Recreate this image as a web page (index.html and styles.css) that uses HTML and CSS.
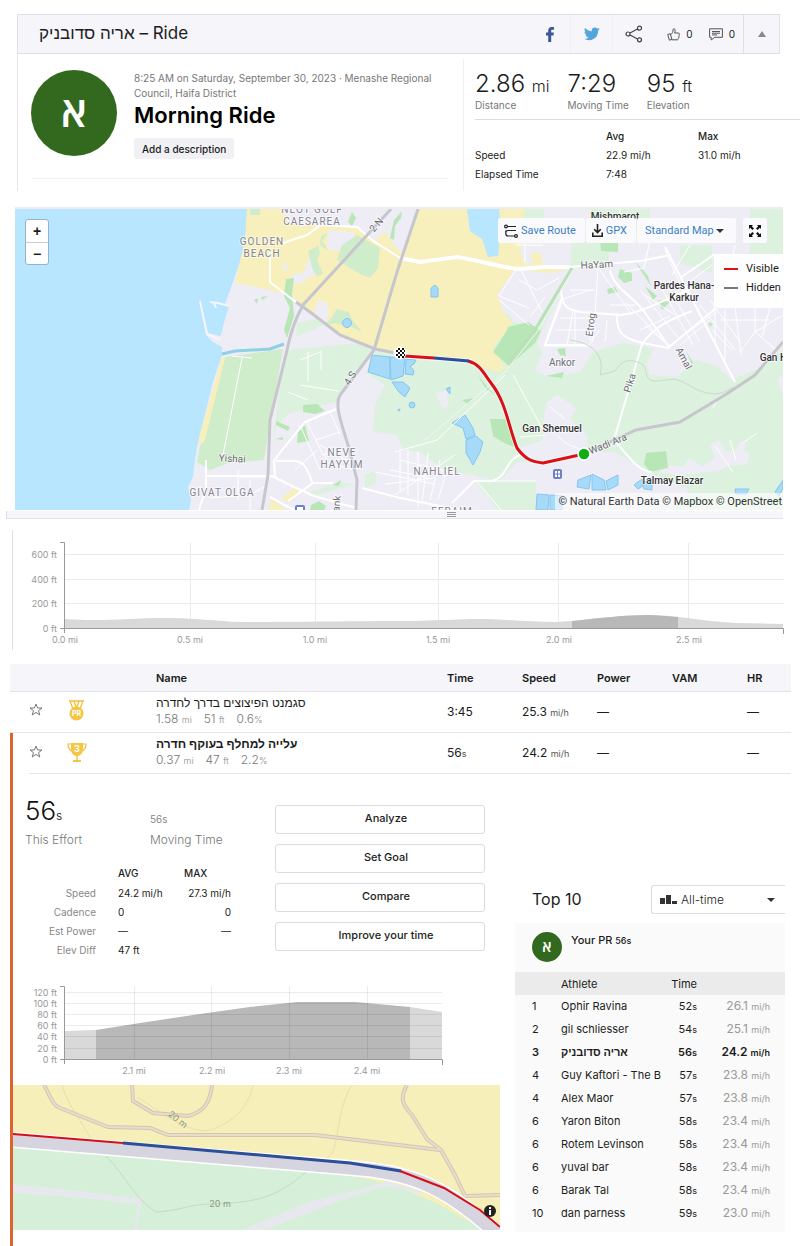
FILE: index.html
```html
<!DOCTYPE html>
<html lang="en">
<head>
  <meta charset="UTF-8" />
  <meta name="viewport" content="width=device-width, initial-scale=1.0"/>
  <title>Morning Ride</title>
  <link rel="stylesheet" href="styles.css">
</head>
<body>
  <header class="topbar">
    <h2>אריה סדובניק – Ride</h2>
    <nav class="share">
      <a href="#" class="share-item" aria-label="Facebook">
        <svg width="8" height="15" viewBox="0 0 8 15"><path fill="#3b5998" d="M2.200 15V8.400H0V5.600h2.200V3.800C2.200 1.300 3.500 0 5.600 0H8v2.700H6.500c-1 0-1.300.400-1.300 1.300v1.600H7.900l-.4 2.800H5.200V15z"/></svg>
      </a>
      <a href="#" class="share-item" aria-label="Twitter">
        <svg width="16" height="14" viewBox="0 0 24 20"><path fill="#55a4dc" d="M23.600 2.400c-.9.400-1.800.6-2.800.8 1-.6 1.800-1.600 2.100-2.700-.9.600-2 1-3.100 1.200A4.900 4.900 0 0 0 11.500 6.100 13.800 13.800 0 0 1 1.500 1c-1.300 2.200-.7 5.100 1.500 6.500-.8 0-1.600-.2-2.200-.6 0 2.300 1.600 4.400 3.900 4.900-.7.200-1.500.2-2.200.1.600 2 2.400 3.300 4.600 3.400A9.900 9.900 0 0 1 0 17.300 13.900 13.900 0 0 0 21.200 4.900c1-.7 1.800-1.500 2.400-2.500z"/></svg>
      </a>
      <a href="#" class="share-item last" aria-label="Share">
        <svg width="18" height="18" viewBox="0 0 18 18" fill="none" stroke="#444" stroke-width="1.200"><path d="M5 8l7.500-4M5 10l7.500 4"/><circle cx="3" cy="9" r="2"/><circle cx="14.500" cy="3.200" r="2"/><circle cx="14.500" cy="14.800" r="2"/></svg>
      </a>
      <button class="count-btn">
        <svg width="13" height="13" viewBox="0 0 13 13" fill="none" stroke="#555"><path d="M.7 6.500l2.600-.8 1.600 5.700-2.500.8zM3.600 6.800C5.300 5.500 6 4 6.200 1.300 6.300.4 8.100.4 8.100 2.200c0 1-.2 1.900-.5 2.800h3.700c1.300 0 1.300 1.700.5 2 .8.500.6 1.600-.2 1.800.5.600.2 1.500-.5 1.600.3.700-.1 1.400-.9 1.400H4.800"/></svg>0
      </button>
      <button class="count-btn">
        <svg width="14" height="13" viewBox="0 0 14 13" fill="none" stroke="#555"><path d="M.6.800h12.800v8.500H5.800L2.200 12V9.300H.6zM3 3.500h8M3 5.200h8M3 6.900h5"/></svg>0
      </button>
      <button class="collapse-btn" aria-label="Collapse">
        <svg width="8" height="6" viewBox="0 0 8 6"><path fill="#888" d="M4 0l4 6H0z"/></svg>
      </button>
    </nav>
  </header>

  <section class="overview">
    <div class="summary">
      <div class="avatar">א</div>
      <div class="details">
        <p class="when">8:25 AM on Saturday, September 30, 2023 · Menashe Regional Council, Haifa District</p>
        <h1>Morning Ride</h1>
        <button class="desc-btn">Add a description</button>
      </div>
    </div>
    <div class="stats">
      <ul class="main-stats">
        <li><strong>2.86 <small>mi</small></strong><span>Distance</span></li>
        <li><strong>7:29</strong><span>Moving Time</span></li>
        <li><strong>95 <small>ft</small></strong><span>Elevation</span></li>
      </ul>
      <table class="more-stats">
        <tr><th></th><th>Avg</th><th>Max</th></tr>
        <tr><td>Speed</td><td>22.9 mi/h</td><td>31.0 mi/h</td></tr>
        <tr><td>Elapsed Time</td><td>7:48</td><td></td></tr>
      </table>
    </div>
  </section>

  <section class="map">
    <svg class="map-canvas" viewBox="15 209 768 301" preserveAspectRatio="xMidYMid slice">
      <rect x="15" y="209" width="768" height="301" fill="#b8e6fe"/>
      <!-- land -->
      <path fill="#eeedf6" d="M248 209L245 240 240 262 225 304 229 306 227 327 220 336 208 333 200 301 206 335 213 342 222 347 222 355 213 382 200 435 197 447 194 467 193 477 188 487 191 500 189 510H783V209z"/>
      <path fill="none" stroke="#f6f5fb" stroke-width="2" d="M200 301L207 334 221 340M210 302l8 1 11 3M214 303l2 5"/>
      <!-- farmland -->
      <path fill="#dcf1de" d="M287 350L357 343 372 350 363 366 337 402 290 413 277 425 272 447 280 385zM297 323l30-7 5 5-36 16z"/>
      <path fill="#dcf1de" d="M376 350L520 310 545 270 575 262 540 335 537 345 542 352 535 370 547 377 580 372 593 352 623 343 653 348 647 365 650 375 677 377 687 368 695 360 715 365 732 380 765 365 783 348V510H670L690 490 640 468 615 452 590 452 560 462 517 462 500 481 473 475 445 470 420 452 403 450 397 435 373 432 375 405 385 385 366 373z"/>
      <path fill="#eeedf6" d="M543 440V420L547 402 557 395 577 408 570 418 587 435 588 455 560 462 527 458 519 448zM435 393l12-2 1 14-4 4-5-8zM525 262l45 6-35 58-22-4-14-26 20-14z"/>
      <path fill="#eeedf6" d="M777 380l6-6v20zM664 466l20 0 4-8 15 8 12-8-5-14 10-3 6 11 10-2 4-9 6 3-2 7 6 3-3 11-18 0-10 6-40 4-20-2z"/>
      <path fill="#dcf1de" d="M474 481h62v29h-38zM523 209h21v9h-21zM571 236h38v32h-38zM590 209h60v24h-60zM750 209h33v45h-33zM680 245h32v28l-32-10zM365 475l12-5-2 14-10 4zM310 492l32-10 12 2-40 12z"/>
      <path fill="#cfeccb" d="M225 357L283 349 268 435 264 460 228 463 210 470 197 462 201 440z"/>
      <path fill="#f7efbc" d="M222 357l3 1-20 82-5 6-1-9z"/>
      <!-- dunes -->
      <path fill="#f7efbc" d="M247 209H282L288 223 300 226 320 225 357 228 372 240 400 260 418 209H525L523 225 524 240 520 250 525 265 513 272 497 295 505 315 513 322 493 348 505 368 500 372 487 370 470 359 400 354 375 349 340 334 310 310 298 305 296 298 270 290 235 283 245 240z"/>
      <path fill="#f7efbc" d="M375 240l10-8 18 24-8 2zM523 264l45 5-18 4-28-3zM531 253h11v12h-8l-3-5z"/>
      <path fill="#eeedf6" d="M236 284l34 6 22 10 3 14-10 32-62 7-3-14 5-20zM310 256c12 4 12 14 4 20l-12 1 4-10zM292 275c8-3 14-3 16 2-2 6-10 7-16 6zM318 301c10-2 14 10 8 21l-12-9zM283 263l5 3-3 5-3-4zM328 230l26 2-3 20-24-3z"/>
      <path fill="#cfeccb" d="M357 235L380 248 378 268 370 278 358 273 337 260 342 245zM337 309l12 3 3 8 10 12-10-5-16-4-12 2 8-8zM250 209h10v6h-10zM308 251l10-5 2 8-3 6 6 14-6 2-5-8zM328 233l-6 8 6 9-8-5 1-9z"/>
      <path fill="#b9e6b6" d="M286 279l8-1-2 16 2 22-7 22-3-8 6-22-6-12zM254 300l4-2-1 6zM261 297l7-1-6 4zM352 212l4 6-4 8-4-4zM390 238l4-18 8-9-1 7-6 8-1 14zM303 405l14-1 8 7-10 3-12-2zM298 432l7-7 4 16-12 2zM276 421l14 6-2 4-12-6zM275 439l8-2v3zM311 505l8-4 7 5-2 5-14-1zM333 485l8-5-2 6zM508 327l20-5 13 9-6 12-26 23-16-14 13-20zM490 419l20 0 8 29-12-4-13-8zM646 453l20-2 2 17-18 4-6-8zM600 236h18v16l-17-1zM620 269l12 4v8l-8 2-6-6zM634 260l14 16 3 10zM607 289l8-2 3 5-10 2zM645 286l12 10-4 4zM658 300l12 2-8 8zM557 349l8-1 1 8-6-1zM478 376l16 18-8-5zM462 400l12-2-6 6zM546 376l18-4-2 6zM686 351l8 13-3-1zM708 322l5 2-3 3z"/>
      <path fill="#f7efbc" d="M272 499l14 11h-18zM281 498l14-10 4 3-9 12z"/>
      <!-- ponds and streams -->
      <g fill="#a5daf9" stroke="#86c5ef" stroke-width="1">
        <circle cx="347" cy="323" r="4.500"/>
        <circle cx="412" cy="405" r="3"/>
        <circle cx="399" cy="410" r="1"/>
        <path d="M431 288l4-3 3 3v9h-7zM372 355l18 2v22l-22-7zM390 357l15 1-2 18-12 4zM406 359l10 1-2 4-4 2 4 5-1 4-8-1zM392 382l11 0 7 6-5 9-6-5zM446 389l4-2v7zM452 423l13-8 8 13 2 7-9 4-3-11zM466 440l10-4 7 6-3 10-7 13-7-12zM578 480l13-5-2 14-12-2zM592 474l12 6 2 10-14 0zM606 481l12-6v10l-10 5zM537 494l12 1-1 15h-12zM550 495l13 1-1 14h-12zM634 485l8-6 2 6-6 4zM642 484l10-6v12l-8-1zM735 489h14l-3 5h-10zM775 492l8-12v8l-4 8z"/>
      </g>
      <path fill="#b8e6fe" d="M467 209h32l2 20-3 27-10 1-6-18-12-8z"/>
      <path fill="none" stroke="#8ed0e4" stroke-width="3" d="M222 354L235 351 270 349 284 344"/>
      <!-- minor streets -->
      <g fill="none" stroke="#fff" stroke-width="1">
        <path d="M242 358L223 455M232 356l20 2M308 352v30M321 350v20M300 360l20-8M300 385l38 6M288 392l20 8M278 477h-40M250 480v30M238 470v30M210 498l40-3 18-10"/>
        <path d="M300 425l20 45 4-4M307 422l16 33 12-4M316 440l24-8M330 412l10 22M320 445l35 20M326 450v20M295 470l22-20M325 462l30 8M400 452v40M408 450v45M418 452v55M390 470l40 8M385 484l50-6M375 472l60 12M428 453l-6 50M440 460l-10 40M448 466l-10 34M400 460l50 12M395 495l60-40"/>
        <path d="M517 268l-18 28 30 12M519 280l18 10 22-12M499 300l30 25M520 268l12 24 10 20M545 346l17-44M545 346h43l5-5 5-72M567 345l6-34M600 270l30 42M590 310v30M575 312v33M555 330h42M560 318h36M560 300l30-10M570 290h24M650 240l-6 28-20 4M665 250l20 45M690 245l-18 30M712 265l-40 30M640 290l40 50M625 302l45 45M645 295l30 20M660 285l33 60M670 290l30 52M700 305l35 45M710 300l30 42M670 345l45-32M645 325l25 22M640 330l30-14M680 345l30-25M715 307v35M735 307l6 48M725 310v50M755 308v24l20 17M770 307l-8 30M755 332l-15 20M755 332l28-17M712 330l20 20M600 330l-10 12M620 209v30M735 245l-2 10M720 320h50M525 235v27M515 245h28M510 235l10 10M610 305h25M607 320l-2 22M545 297l-15 20"/>
        <path d="M513 375l30 55M557 435c10 12 15 10 25 15M550 407l15 12M520 437l25-2M715 446l18 26M730 440l6 20M717 400l-4 8M757 433l-14 10M476 481l25 29M395 452L437 440 505 375"/>
      </g>
      <!-- streets -->
      <g fill="none" stroke="#fff" stroke-width="2">
        <path d="M270 248v34l27 21M283 243L307 235 320 225 357 227 372 240 400 258" stroke-width="2"/>
        <path d="M400 258L420 262 457 257C480 260 500 268 520 269L545 267 570 267" stroke-width="4"/>
        <path d="M570 267L640 261 671 255" stroke-width="2"/>
        <path d="M336 409L305 422C295 435 285 445 274 461L275 478M206 460v28l-7 22M206 476l66 0 20 10 22 10 42 12M276 461h20c12 2 12 14 17 22h20M313 483l-25 18M362 488l38 10 60 12M270 497l24 13M572 270l-11 18c0 20 8 22 20 24l40 3c20-2 40-14 70-26M610 270c2 15 20 25 33 40l27 38M617 313c-1 20 5 25 26 30l25 5 48-40M642 344l-28 96c15 17 25 32 38 32M665 247l70 135M642 344c15-20 30-25 50-33M520 455c-15 5-12 22-28 26l-18 0-22 22M717 307h66M680 278l35-24M561 300L545 345h43"/>
        <path stroke-width="1" d="M474 481h62"/>
      </g>
      <path fill="none" stroke="#c6ddc9" stroke-width="1" d="M570 340c25 3 35 18 30 35l15-4c8-12 15-12 25-8s2 18 15 18 18-5 30 2 30 18 48 4"/>
      <path fill="none" stroke="#b9e0b8" stroke-width="3" d="M572 268L535 330 510 360"/>
      <path fill="none" stroke="#f2f7f2" stroke-width="1" d="M572 272L537 332 505 372 425 440"/>
      <!-- highways -->
      <g fill="none" stroke="#c7c6cd" stroke-width="3">
        <path d="M391 209L303 305C298 314 291 330 287 350L270 420 268 475 262 510"/>
        <path d="M296 302L310 312 340 335 375 349 401 354M418 209L397 272 374 350 340 395C334 405 342 425 348 445L357 480 356 510"/>
        <path d="M584 454L636 430 680 422 725 395 755 375 783 342"/>
      </g>
      <!-- ride -->
      <g fill="none" stroke-width="3" stroke-linejoin="round">
        <path stroke="#fff" stroke-opacity=".6" stroke-width="5" d="M404 356L469 361C480 364 484 374 491 383 506 402 508 425 517 448 525 459 532 462 543 463L584 454"/>
        <path stroke="#d91018" d="M404 356L434 358M468 361C480 364 484 374 491 383 506 402 508 425 517 448 525 459 532 462 543 463L584 454"/>
        <path stroke="#2c4e9f" d="M434 358L469 361"/>
      </g>
      <circle cx="584" cy="454" r="6" fill="#0fae12" stroke="#fff" stroke-width="1.500"/>
      <circle cx="400" cy="353" r="6.500" fill="#fff"/>
      <path fill="#111" d="M398 348h2v2h-2zM402 348h2v2h-2zM396 350h2v2h-2zM400 350h2v2h-2zM404 350h1v2h-1zM398 352h2v2h-2zM402 352h2v2h-2zM396 354h2v2h-2zM400 354h2v2h-2zM404 354h1v2h-1zM398 356h2v2h-2zM402 356h2v2h-2z"/>
      <g fill="#fff" stroke="#6f7fc4" stroke-width="2"><rect x="296" y="506" width="8" height="7" rx="1"/><rect x="554" y="470" width="7" height="8" rx="1"/></g>
      <path stroke="#6f7fc4" d="M555 474h5M557.500 471v6"/>
      <g class="area-label">
        <text x="312" y="213">NEOT GOLF</text>
        <text x="312" y="225">CAESAREA</text>
        <text x="262" y="245">GOLDEN</text>
        <text x="262" y="257">BEACH</text>
        <text x="342" y="456">NEVE</text>
        <text x="342" y="468">HAYYIM</text>
        <text x="222" y="496">GIVAT OLGA</text>
        <text x="437" y="475">NAHLIEL</text>
        <text x="452" y="515">EFRAIM</text>
      </g>
      <g class="road-label">
        <text x="232" y="462" transform="rotate(3 232 462)">Yishai</text>
        <text x="379" y="227" transform="rotate(-50 379 227)">2 N</text>
        <text x="353" y="380" transform="rotate(-58 353 380)">4 S</text>
        <text x="340" y="504" transform="rotate(-85 340 504)">ank</text>
        <text x="562" y="366">Ankor</text>
        <text x="597" y="268" transform="rotate(-3 597 268)">HaYam</text>
        <text x="594" y="325" transform="rotate(-83 594 325)">Etrog</text>
        <text x="681" y="360" transform="rotate(62 681 360)">Amal</text>
        <text x="633" y="384" transform="rotate(-72 633 384)">Pika</text>
        <text x="609" y="447" transform="rotate(-22 609 447)">Wadi Ara</text>
      </g>
      <g class="town-label">
        <text x="615" y="220">Mishmarot</text>
        <text x="552" y="432">Gan Shemuel</text>
        <text x="684" y="289">Pardes Hana-</text>
        <text x="684" y="301">Karkur</text>
        <text x="776" y="361">Gan Ha</text>
        <text x="672" y="484">Talmay Elazar</text>
      </g>
    </svg>
    <div class="zoom">
      <button aria-label="Zoom in">+</button>
      <button aria-label="Zoom out">−</button>
    </div>
    <div class="map-tools">
      <button class="tool">
        <svg width="14" height="14" viewBox="0 0 14 14" fill="none" stroke="#222" stroke-width="1.200"><circle cx="2" cy="2.500" r="1.400"/><circle cx="12" cy="12" r="1.400"/><path d="M3.500 2.500H12M12 6.500H4c-3 0-3 5.500 0 5.500h6.500M1 7h2"/></svg>Save Route
      </button>
      <button class="tool">
        <svg width="11" height="13" viewBox="0 0 11 13" fill="none" stroke="#222" stroke-width="1.600"><path d="M5.500 0v8.500M2.200 5.300l3.300 3.300 3.300-3.300M.8 8.500v3.700h9.400V8.500"/></svg>GPX
      </button>
      <div class="tool-select">
        <select aria-label="Map style"><option>Standard Map</option></select>
      </div>
      <button class="tool full" aria-label="Full screen">
        <svg width="14" height="14" viewBox="0 0 14 14"><path fill="#111" d="M1 1h4L3.800 2.200 6 4.400 4.400 6 2.200 3.800 1 5zM13 1v4l-1.200-1.200L9.600 6 8 4.400l2.200-2.200L9 1zM13 13H9l1.200-1.200L8 9.600 9.600 8l2.200 2.200L13 9zM1 13V9l1.200 1.200L4.400 8 6 9.600l-2.200 2.200L5 13z"/></svg>
      </button>
    </div>
    <ul class="legend">
      <li class="visible">Visible</li>
      <li class="private">Hidden</li>
    </ul>
    <div class="credit">© Natural Earth Data © Mapbox © OpenStreet</div>
  </section>
  <div class="resizer"><i></i></div>

  <section class="elevation">
    <svg class="chart" viewBox="13 530 774 120">
      <path class="grid" d="M64 554.500H784M64 579.500H784M64 603.500H784M190.500 543V628M315.500 543V628M438.500 543V628M558.500 543V628M688.500 543V628"/>
      <path class="area" d="M65 619C100 622 130 618 165 618S220 622 250 622 370 621 400 621 460 619 480 619 530 622 555 622L572 621C600 618 625 615 650 615S700 621 735 623L783 624V628H65z"/>
      <path class="area-on" d="M572 621C600 618 625 615 650 615L678 617V628H572z"/>
      <path class="axis" d="M60 542.500H64.500V633M60 628.500H783.500V634"/>
      <g class="y-label">
        <text x="57" y="558">600 ft</text>
        <text x="57" y="583">400 ft</text>
        <text x="57" y="607">200 ft</text>
        <text x="57" y="632">0 ft</text>
      </g>
      <g class="x-label">
        <text x="65" y="643">0.0 mi</text>
        <text x="190" y="643">0.5 mi</text>
        <text x="315" y="643">1.0 mi</text>
        <text x="438" y="643">1.5 mi</text>
        <text x="559" y="643">2.0 mi</text>
        <text x="689" y="643">2.5 mi</text>
      </g>
    </svg>
  </section>

  <table class="segments">
    <thead>
      <tr>
        <th class="c-star"></th><th class="c-medal"></th><th class="c-name">Name</th>
        <th class="c-num">Time</th><th class="c-num">Speed</th><th class="c-num">Power</th><th class="c-num">VAM</th><th class="c-hr">HR</th>
      </tr>
    </thead>
    <tbody>
      <tr>
        <td class="c-star">
          <button class="star" aria-label="Star segment"><svg width="14" height="13" viewBox="0 0 14 13" fill="none" stroke="#777"><path d="M7 1l1.600 4H13L9.500 7.700 10.800 12 7 9.400 3.200 12l1.300-4.300L1 5h4.400z"/></svg></button>
        </td>
        <td>
          <svg width="19" height="22" viewBox="0 0 19 22"><path fill="none" stroke="#f2bf3c" stroke-width="1.300" d="M2 1h15M3 1l3 8M7 1l2 6M12 1l-2 6M16 1l-3 8"/><circle cx="9.500" cy="13.500" r="7" fill="#f6c544"/><text class="medal-text" x="9.500" y="16">PR</text></svg>
        </td>
        <td class="seg-name">סגמנט הפיצוצים בדרך לחדרה<div class="seg-info"><span>1.58 <small>mi</small></span><span>51 <small>ft</small></span><span>0.6<small>%</small></span></div></td>
        <td>3:45</td><td>25.3 <small>mi/h</small></td><td>—</td><td></td><td>—</td>
      </tr>
      <tr class="active">
        <td class="c-star">
          <button class="star" aria-label="Star segment"><svg width="14" height="13" viewBox="0 0 14 13" fill="none" stroke="#777"><path d="M7 1l1.600 4H13L9.500 7.700 10.800 12 7 9.400 3.200 12l1.300-4.300L1 5h4.400z"/></svg></button>
        </td>
        <td>
          <svg width="20" height="21" viewBox="0 0 20 21"><path fill="#f6c544" d="M4 1h12v6c0 4-2 6.500-5.300 7v4H14v2H6v-2h3.300v-4C6 13.500 4 11 4 7z"/><path fill="none" stroke="#f2bf3c" stroke-width="1.200" d="M4 2H1c0 4 1 6 4 7M16 2h3c0 4-1 6-4 7"/><text class="medal-text cup" x="10" y="10">3</text></svg>
        </td>
        <td class="seg-name">עלייה למחלף בעוקף חדרה<div class="seg-info"><span>0.37 <small>mi</small></span><span>47 <small>ft</small></span><span>2.2<small>%</small></span></div></td>
        <td>56<small class="sec">s</small></td><td>24.2 <small>mi/h</small></td><td>—</td><td></td><td>—</td>
      </tr>
    </tbody>
  </table>

  <section class="segment-detail">
    <div class="effort">
      <div class="effort-top">
        <div class="effort-data">
          <dl class="effort-times">
            <div><dd class="big">56<small>s</small></dd><dt>This Effort</dt></div>
            <div><dd>56s</dd><dt>Moving Time</dt></div>
          </dl>
          <table class="effort-table">
            <tr><td></td><th>AVG</th><th>MAX</th></tr>
            <tr><td>Speed</td><td>24.2 mi/h</td><td>27.3 mi/h</td></tr>
            <tr><td>Cadence</td><td>0</td><td>0</td></tr>
            <tr><td>Est Power</td><td>—</td><td>—</td></tr>
            <tr><td>Elev Diff</td><td>47 ft</td><td></td></tr>
          </table>
        </div>
        <div class="actions">
          <button>Analyze</button>
          <button>Set Goal</button>
          <button>Compare</button>
          <button>Improve your time</button>
        </div>
      </div>
      <svg class="chart" viewBox="13 980 487 105">
        <path class="area" d="M65 1031L96 1030V1059H65zM410 1007L442 1012V1059H410z"/>
        <path class="area-on" d="M96 1030L140 1023 200 1014 250 1007 298 1002H355L410 1007V1059H96z"/>
        <path class="grid dark" d="M64 992.500H442M64 1003.500H442M64 1014.500H442M64 1025.500H442M64 1036.500H442M64 1048.500H442M134.500 986V1059M211.500 986V1059M289.500 986V1059M367.500 986V1059"/>
        <path class="axis" d="M60 986.500H64.500V1064M60 1059.500H442.500V1065"/>
        <g class="y-label">
          <text x="57" y="996">120 ft</text>
          <text x="57" y="1007">100 ft</text>
          <text x="57" y="1018">80 ft</text>
          <text x="57" y="1029">60 ft</text>
          <text x="57" y="1040">40 ft</text>
          <text x="57" y="1052">20 ft</text>
          <text x="57" y="1063">0 ft</text>
        </g>
        <g class="x-label">
          <text x="134" y="1074">2.1 mi</text>
          <text x="212" y="1074">2.2 mi</text>
          <text x="289" y="1074">2.3 mi</text>
          <text x="367" y="1074">2.4 mi</text>
        </g>
      </svg>
      <svg class="mini-map" viewBox="13 1085 487 145">
        <rect x="13" y="1085" width="487" height="145" fill="#f6efb9"/>
        <path fill="#d5efd8" d="M13 1145L350 1175 400 1187 440 1205 484 1230H13z"/>
        <path fill="#e7e8ee" d="M13 1184L70 1190 144 1199 141 1204 137 1230H134L138 1204 70 1197 13 1193zM242 1230L310 1201 335 1196 385 1182 390 1184 340 1201 265 1230zM385 1180l38 12-3 2-35-8z"/>
        <path fill="none" stroke="#e6dfb2" d="M62 1085c5 18 15 30 28 52M253 1085c-5 25-25 42-48 46-25-2-45-20-68-34M352 1085c-15 25-12 50-20 68l-10 12"/>
        <path fill="none" stroke="#c3dcc4" d="M106 1156c20 20 30 45 50 56 30-2 30-8 60-8 40-2 60-6 90-32"/>
        <path fill="none" stroke="#d3c5b1" stroke-width="4" d="M44 1085C50 1095 52 1105 60 1108L108 1127 150 1128 168 1135H315L440 1150M132 1085l1 16 20 12 35 3c15-4 22-12 24-31M407 1085c-8 14-4 20 5 30l15 24 14 11 14 25 10 21 35-1"/>
        <path fill="none" stroke="#e8dccb" stroke-width="2" d="M44 1085C50 1095 52 1105 60 1108L108 1127 150 1128 168 1135H315L440 1150M132 1085l1 16 20 12 35 3c15-4 22-12 24-31M407 1085c-8 14-4 20 5 30l15 24 14 11 14 25 10 21 35-1"/>
        <path fill="none" stroke="#fff" stroke-width="16" d="M13 1140L350 1168C410 1172 445 1186 497 1234"/>
        <path fill="none" stroke="#d5d4df" stroke-width="13" d="M13 1140L350 1168C410 1172 445 1186 497 1234"/>
        <path fill="none" stroke="#d40f18" stroke-width="2" d="M13 1134L123 1143M400 1171L444 1188 480 1210 500 1227"/>
        <path fill="none" stroke="#2d4f99" stroke-width="3" d="M123 1143L350 1163 401 1171"/>
        <text class="contour" x="220" y="1207">20 m</text>
        <text class="contour" x="176" y="1122" transform="rotate(38 176 1122)">20 m</text>
        <circle cx="490" cy="1211" r="6" fill="#222"/>
        <path stroke="#fff" stroke-width="2" d="M490 1207v2M490 1210v5"/>
      </svg>
    </div>

    <aside class="leaders">
      <div class="leaders-head">
        <h3>Top 10</h3>
        <div class="range">
          <svg width="17" height="9" viewBox="0 0 17 9" fill="#333"><path d="M0 3h5v6H0zM6 0h5v9H6zM12 6h5v3h-5z"/></svg>
          <select aria-label="Period"><option>All-time</option></select>
        </div>
      </div>
      <div class="board">
        <div class="your-pr">
          <div class="avatar small">א</div>
          <p>Your PR <small>56s</small></p>
        </div>
        <table>
          <tr><th class="rank"></th><th class="name">Athlete</th><th class="time">Time</th><th></th></tr>
          <tr><td>1</td><td>Ophir Ravina</td><td>52<small>s</small></td><td>26.1 <small>mi/h</small></td></tr>
          <tr><td>2</td><td>gil schliesser</td><td>54<small>s</small></td><td>25.1 <small>mi/h</small></td></tr>
          <tr class="me"><td>3</td><td>אריה סדובניק</td><td>56<small>s</small></td><td>24.2 <small>mi/h</small></td></tr>
          <tr><td>4</td><td>Guy Kaftori - The B</td><td>57<small>s</small></td><td>23.8 <small>mi/h</small></td></tr>
          <tr><td>4</td><td>Alex Maor</td><td>57<small>s</small></td><td>23.8 <small>mi/h</small></td></tr>
          <tr><td>6</td><td>Yaron Biton</td><td>58<small>s</small></td><td>23.4 <small>mi/h</small></td></tr>
          <tr><td>6</td><td>Rotem Levinson</td><td>58<small>s</small></td><td>23.4 <small>mi/h</small></td></tr>
          <tr><td>6</td><td>yuval bar</td><td>58<small>s</small></td><td>23.4 <small>mi/h</small></td></tr>
          <tr><td>6</td><td>Barak Tal</td><td>58<small>s</small></td><td>23.4 <small>mi/h</small></td></tr>
          <tr><td>10</td><td>dan parness</td><td>59<small>s</small></td><td>23.0 <small>mi/h</small></td></tr>
        </table>
      </div>
    </aside>
  </section>
</body>
</html>
```

FILE: styles.css
```css
:root {
  --text: #1c1c20;
  --muted: #777;
  --light: #999;
  --line: #e6e6ea;
  --bar: #f5f5fa;
  --orange: #dc6430;
  --green: #33691e;
  --link: #3b7fc4;
}

* {
  box-sizing: border-box;
}

body {
  margin: 0;
  padding-top: 14px;
  background: #fff;
  color: var(--text);
  font-family: Inter, "Liberation Sans", sans-serif;
  font-size: 10px;
}

h1, h2, h3, p, ul, dl, dd {
  margin: 0;
  padding: 0;
  font-weight: 400;
}

ul {
  list-style: none;
}

svg {
  display: block;
}

button, select {
  font-family: inherit;
  color: inherit;
  margin: 0;
  padding: 0;
  border: none;
  background: none;
}

table {
  border-spacing: 0;
  table-layout: fixed;
}

th, td {
  padding: 0;
  text-align: left;
}

/* top bar */
.topbar {
  display: flex;
  justify-content: space-between;
  height: 40px;
  margin: 0 20px 0 17px;
  padding-left: 21px;
  background: var(--bar);
  border: 1px solid #dedee6;
}

.topbar h2 {
  font-size: 17px;
  line-height: 36px;
}

.share {
  display: flex;
}

.share-item, .count-btn, .collapse-btn {
  display: flex;
  align-items: center;
  justify-content: center;
}

.share-item {
  width: 42px;
  border-right: 1px solid #efeff4;
}

.share-item.last {
  border-right: none;
}

.count-btn {
  gap: 6px;
  width: 42px;
  font-size: 10px;
}

.share-item + .count-btn {
  margin-left: 4px;
}

.collapse-btn {
  width: 36px;
  border-left: 1px solid #dedee6;
}

/* overview */
.overview {
  display: flex;
  height: 137px;
  margin-left: 17px;
  border-left: 1px solid var(--line);
}

.summary {
  display: flex;
  gap: 17px;
  flex: 0 1 417px;
  height: 125px;
  margin: 0 15px 0 13px;
  padding-top: 16px;
  border-bottom: 1px solid #f2f2f4;
}

.avatar {
  flex: none;
  width: 86px;
  height: 86px;
  border-radius: 50%;
  background: var(--green);
  color: #fff;
  font: 600 42px/82px "Open Sans", "Liberation Sans", sans-serif;
  text-align: center;
}

.details {
  padding-top: 1px;
}

.when {
  color: var(--muted);
  font-size: 10px;
  line-height: 15px;
}

h1 {
  font-size: 22px;
  font-weight: 600;
  line-height: 28px;
  color: #000;
}

.desc-btn {
  height: 21px;
  margin-top: 9px;
  padding: 0 8px;
  border-radius: 3px;
  background: #f0f0f5;
  font-size: 10px;
  font-weight: 500;
}

.stats {
  flex: 1;
  margin-top: 5px;
  padding: 10px 0 0 11px;
  border-left: 1px solid #f0f0f2;
}

.main-stats {
  display: flex;
  height: 51px;
  gap: 18px;
  border-bottom: 1px solid #ddd;
}

.main-stats strong {
  display: block;
  height: 30px;
  font-size: 24px;
  font-weight: 300;
  line-height: 30px;
}

.main-stats small {
  font-size: 16px;
}

.main-stats span {
  color: var(--muted);
  line-height: 12px;
}

.more-stats {
  width: 100%;
  margin-top: 6px;
}

.more-stats th, .more-stats td {
  height: 19px;
}

.more-stats tr > :first-child {
  width: 131px;
}

.more-stats tr > :nth-child(2) {
  width: 92px;
}

th {
  font-weight: 500;
}

/* map */
.map {
  position: relative;
  margin: 16px 17px 0 15px;
  border-top: 2px solid #ededf1;
  overflow: hidden;
}

.map-canvas {
  width: 100%;
}

.map-canvas text {
  font-family: Roboto, sans-serif;
  text-anchor: middle;
  paint-order: stroke;
  stroke: #fff;
  stroke-opacity: .6;
  stroke-width: 2px;
}

.area-label {
  font-size: 10px;
  letter-spacing: 1px;
  fill: #84848d;
}

.road-label {
  font-size: 10px;
  fill: #6d6d74;
}

.town-label {
  font-size: 10px;
  font-weight: 500;
  fill: #333;
}

.zoom {
  position: absolute;
  top: 10px;
  left: 10px;
  display: flex;
  flex-direction: column;
  width: 24px;
  border: 1px solid #92b5c9;
  border-radius: 3px;
  background: #fff;
}

.zoom button {
  height: 22px;
  font: bold 14px/22px "Liberation Sans", sans-serif;
}

.zoom button + button {
  border-top: 1px solid #ccc;
}

.map-tools {
  position: absolute;
  top: 9px;
  right: 16px;
  display: flex;
  gap: 1px;
}

.tool, .tool-select select {
  display: flex;
  align-items: center;
  gap: 3px;
  height: 25px;
  padding: 0 9px 0 6px;
  background: #fafafc;
  color: var(--link);
  font: 11px Roboto, sans-serif;
  border-radius: 2px;
}

.tool-select {
  position: relative;
}

.tool-select select, .range select {
  appearance: none;
}

.tool-select select {
  width: 99px;
  padding: 0 0 0 8px;
}

.tool-select::after, .range::after {
  content: "";
  position: absolute;
  top: 11px;
  right: 12px;
  border: 4px solid transparent;
  border-top-color: #333;
  border-bottom: none;
}

.tool.full {
  margin-left: 6px;
  padding: 0 5px;
}

.legend {
  position: absolute;
  top: 45px;
  right: 0;
  width: 69px;
  padding: 5px 0 10px 10px;
  background: rgba(255, 255, 255, .9);
  font: 11px/19px Roboto, sans-serif;
}

.legend li {
  display: flex;
  align-items: center;
  gap: 8px;
}

.legend li::before {
  content: "";
  width: 14px;
  height: 2px;
  background: #e01018;
}

.legend .private::before {
  background: #777780;
}

.credit {
  position: absolute;
  right: 0;
  bottom: 0;
  padding: 0 1px 0 3px;
  background: rgba(255, 255, 255, .6);
  color: #333;
  font: 11px/17px Roboto, sans-serif;
  white-space: nowrap;
}

.resizer {
  display: flex;
  justify-content: center;
  height: 8px;
  margin: 1px 17px 0 6px;
  padding: 1px 0 0 113px;
  background: #f7f7fb;
  border-left: 1px solid #ddd;
  border-bottom: 1px solid #e2e2ec;
}

.resizer i {
  width: 9px;
  height: 5px;
  border: solid #999;
  border-width: 1px 0;
  background: linear-gradient(#999, #999) center / 100% 1px no-repeat;
}

/* charts */
.elevation {
  margin: 11px 13px 0 12px;
  border-left: 1px solid #e0e0e0;
}

.chart {
  width: 100%;
}

.grid {
  fill: none;
  stroke: #ebebeb;
}

.grid.dark {
  stroke: #000;
  stroke-opacity: .08;
}

.area {
  fill: #d9d9d9;
}

.area-on {
  fill: #b8b8b8;
}

.axis {
  fill: none;
  stroke: #999;
}

.y-label, .x-label {
  font-size: 9px;
  fill: var(--light);
}

.y-label {
  text-anchor: end;
}

.x-label {
  text-anchor: middle;
}

/* segments */
.segments {
  width: calc(100% - 19px);
  margin: 14px 9px 0 10px;
  font-size: 12px;
}

.segments th {
  height: 28px;
  background: var(--bar);
  border-bottom: 1px solid #e2e2e8;
  font-size: 11px;
  font-weight: 600;
}

.segments td {
  height: 41px;
  padding-bottom: 2px;
  border-bottom: 1px solid var(--line);
}

.segments .c-star {
  width: 57px;
  padding-left: 19px;
}

.c-medal {
  width: 89px;
}

.c-num {
  width: 75px;
}

.c-hr {
  width: 44px;
}

.segments small {
  font-size: 9px;
  color: #555;
}

/* the orange edge runs on into the details, so the rule starts after it */
.segments .active .c-star {
  padding-left: 16px;
  border-left: 3px solid var(--orange);
  border-bottom: none;
  background: linear-gradient(var(--line), var(--line)) right bottom / 38px 1px no-repeat;
}

.segments .seg-name {
  padding-bottom: 3px;
  line-height: 16px;
}

.active .seg-name {
  font-weight: 600;
}

.segments .seg-info {
  display: flex;
  gap: 12px;
  font-weight: 300;
  font-size: 12px;
  line-height: 15px;
  color: #777;
}

.seg-info small {
  color: #888;
}

.medal-text {
  fill: #fff;
  font-size: 7px;
  font-weight: 700;
  text-anchor: middle;
}

.medal-text.cup {
  font-size: 9px;
}

/* selected segment */
.segment-detail {
  display: flex;
  gap: 15px;
  margin: 0 15px 0 10px;
  border-left: 3px solid var(--orange);
}

.effort {
  flex: 1;
  min-width: 0;
  padding-bottom: 16px;
}

.effort-top {
  display: flex;
  justify-content: space-between;
  height: 206px;
  padding: 22px 15px 0 12px;
}

.effort-times {
  display: flex;
}

.effort-times > div {
  width: 125px;
}

.effort-times dd {
  height: 34px;
  padding-top: 13px;
  font-size: 10px;
  line-height: 20px;
  color: #888;
}

.effort-times .big {
  padding: 0;
  color: #111;
  font-size: 26px;
  font-weight: 300;
  line-height: 30px;
}

.big small {
  font-size: 12px;
}

.effort-times dt {
  font-size: 12px;
  font-weight: 300;
  line-height: 20px;
  color: #777;
}

.effort-table {
  width: 206px;
  margin-top: 13px;
}

.effort-table th, .effort-table td {
  height: 19px;
}

.effort-table th {
  height: 20px;
}

.effort-table tr > :first-child {
  width: 71px;
  color: #888;
  text-align: right;
}

.effort-table tr > :nth-child(2) {
  width: 88px;
  padding-left: 22px;
}

.effort-table td:nth-child(3) {
  text-align: right;
}

.actions {
  display: flex;
  flex-direction: column;
  gap: 10px;
  width: 211px;
  padding-top: 9px;
}

.actions button {
  height: 29px;
  padding: 0 0 3px 12px;
  border: 1px solid #dcdce0;
  border-radius: 3px;
  font-size: 11px;
  font-weight: 500;
}

.mini-map {
  width: 100%;
}

.contour {
  font: 9px Inter, sans-serif;
  fill: #8b9b84;
  text-anchor: middle;
}

/* leaderboard */
.leaders {
  flex: none;
  width: 270px;
  padding-top: 111px;
}

.leaders-head {
  display: flex;
  justify-content: space-between;
  height: 38px;
  padding-left: 17px;
}

.leaders-head h3 {
  font-size: 16px;
  line-height: 28px;
}

.range {
  position: relative;
  display: flex;
  align-items: center;
  width: 134px;
  height: 29px;
  padding-left: 8px;
  border: 1px solid #ddd;
  border-right: none;
  border-radius: 3px 0 0 3px;
}

.range select {
  flex: 1;
  height: 27px;
  padding-left: 4px;
  font-size: 12px;
  font-weight: 300;
}

.range::after {
  right: 10px;
  top: 12px;
}

.board {
  padding-bottom: 7px;
  background: #fafafa;
}

.your-pr {
  display: flex;
  gap: 9px;
  height: 49px;
  padding: 9px 0 0 17px;
  font-size: 11px;
  font-weight: 500;
}

.your-pr p {
  font-weight: 500;
  line-height: 17px;
}

.your-pr small {
  font-size: 10px;
}

.avatar.small {
  width: 30px;
  height: 30px;
  font-size: 15px;
  line-height: 29px;
}

.board table {
  width: 100%;
  font-size: 11px;
}

.board th {
  height: 23px;
  background: #ebebeb;
  font-weight: 400;
}

.board td {
  height: 23px;
  padding-bottom: 2px;
  white-space: nowrap;
  overflow: hidden;
}

.board tr > :first-child {
  width: 46px;
  padding-left: 17px;
}

.board .name {
  width: 103px;
}

.board .time {
  width: 33px;
}

.board small {
  font-size: 9px;
}

.board tr > :nth-child(3), .board tr > :nth-child(4) {
  text-align: right;
}

.board td:nth-child(4) {
  padding-right: 15px;
  color: var(--light);
  font-size: 12px;
}

.board .me td {
  color: var(--text);
  font-weight: 600;
}
```
